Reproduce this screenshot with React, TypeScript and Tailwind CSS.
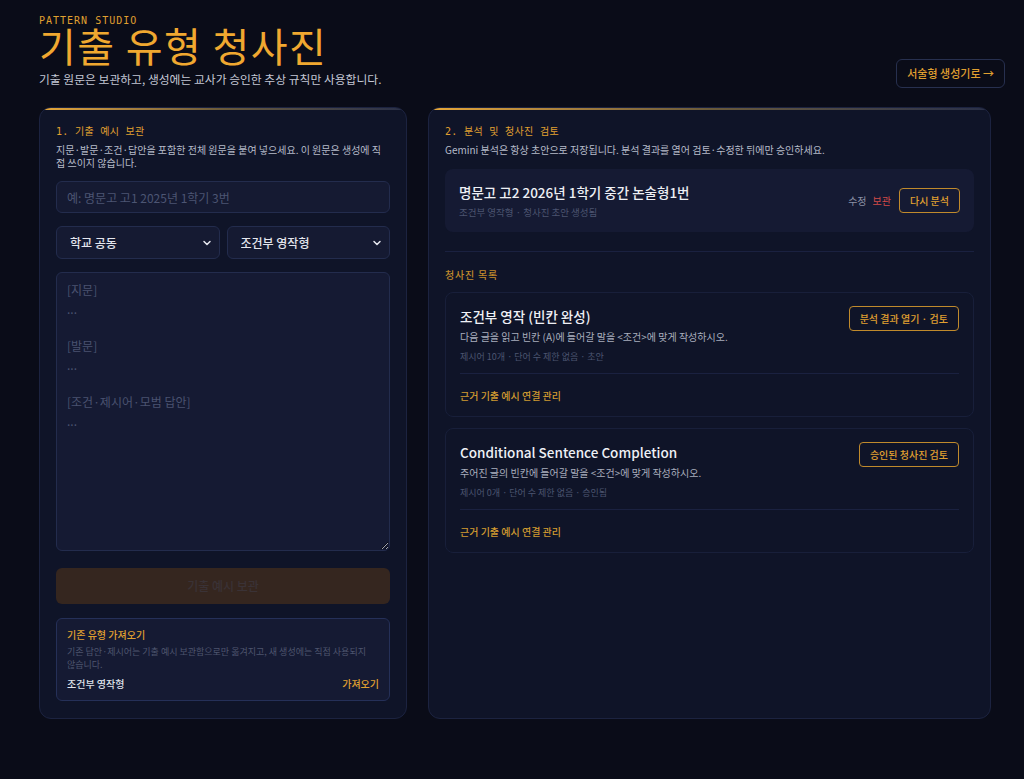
import React from 'react';
import { ChevronDown } from 'lucide-react';

const sans = { fontFamily: '"Noto Sans CJK KR", "Noto Sans", sans-serif' };
const mono = { fontFamily: '"DejaVu Sans Mono", "Noto Sans CJK KR", monospace' };

const placeholderText = '[지문]\n...\n\n[발문]\n...\n\n[조건·제시어·모범 답안]\n...';

interface Blueprint {
  title: string;
  prompt: string;
  meta: string;
  action: string;
}

const blueprints: Blueprint[] = [
  {
    title: '조건부 영작 (빈칸 완성)',
    prompt: '다음 글을 읽고 빈칸 (A)에 들어갈 말을 <조건>에 맞게 작성하시오.',
    meta: '제시어 10개 · 단어 수 제한 없음 · 초안',
    action: '분석 결과 열기 · 검토',
  },
  {
    title: 'Conditional Sentence Completion',
    prompt: '주어진 글의 빈칸에 들어갈 말을 <조건>에 맞게 작성하시오.',
    meta: '제시어 0개 · 단어 수 제한 없음 · 승인됨',
    action: '승인된 청사진 검토',
  },
];

function Select({ value }: { value: string }) {
  return (
    <div className="relative">
      <select
        defaultValue={value}
        className="w-full h-[33px] appearance-none rounded-md border border-[#232c4d] bg-[#151a32] pl-[13px] pr-8 text-[12px] font-medium text-[#e4e6ee] outline-none"
        style={sans}
      >
        <option>{value}</option>
      </select>
      <ChevronDown
        className="pointer-events-none absolute right-[7px] top-1/2 -translate-y-1/2 text-[#e4e6ee]"
        size={12}
        strokeWidth={3}
      />
    </div>
  );
}

function SectionTitle({ children }: { children: React.ReactNode }) {
  return (
    <div className="text-[10px] leading-[13px] tracking-[0.03em] text-[#e0a030]" style={mono}>
      {children}
    </div>
  );
}

export default function App() {
  return (
    <div className="min-h-[779px] bg-[#0a0c18] pl-[39px] pr-[33px] pt-[15px] pb-[59px]" style={sans}>
      {/* Header */}
      <div className="-mr-[14px] flex items-end justify-between">
        <div>
          <div className="text-[10px] leading-[12px] tracking-[0.1em] text-[#e0a030]" style={mono}>
            PATTERN STUDIO
          </div>
          <h1 className="text-[40px] leading-[36px] tracking-[0.035em] text-[#f0a830]">기출 유형 청사진</h1>
          <p className="mt-[8px] text-[11.8px] leading-[16px] text-[#c3c7d4]">
            기출 원문은 보관하고, 생성에는 교사가 승인한 추상 규칙만 사용합니다.
          </p>
        </div>
        <button className="mb-[-1px] h-[29px] rounded-md border border-[#27304f] px-[10px] text-[11px] font-medium text-[#e0a030]">
          서술형 생성기로 →
        </button>
      </div>

      <div className="mt-[20px] grid grid-cols-[368px_1fr] gap-[21px] h-[612px]">
        {/* Left panel */}
        <div className="flex flex-col overflow-hidden rounded-xl border border-[#1c2340] bg-[#0f1428]">
          <div className="h-[2px] bg-gradient-to-r from-[#e8a838] via-[#6a5a3a] to-[#2a3048]" />
          <div className="flex flex-1 flex-col px-[16px] pt-[15px]">
            <SectionTitle>1. 기출 예시 보관</SectionTitle>
            <p className="mt-[5px] text-[10px] leading-[13px] text-[#b6bbc9]">
              지문·발문·조건·답안을 포함한 전체 원문을 붙여 넣으세요. 이 원문은 생성에 직접 쓰이지 않습니다.
            </p>
            <input
              placeholder="예: 명문고 고1 2025년 1학기 3번"
              className="mt-[12px] h-[32px] w-full rounded-md border border-[#232c4d] bg-[#151a32] px-[10px] text-[12px] text-[#e4e6ee] outline-none placeholder:text-[#4c5573]"
              style={sans}
            />
            <div className="mt-[13px] grid grid-cols-2 gap-[7px]">
              <Select value="학교 공동" />
              <Select value="조건부 영작형" />
            </div>
            <textarea
              placeholder={placeholderText}
              className="mt-[13px] h-[279px] w-full resize-y rounded-md border border-[#232c4d] bg-[#151a33] px-[10px] py-[8px] text-[12px] leading-[18.7px] text-[#e4e6ee] outline-none placeholder:text-[#4a5270]"
              style={sans}
            />
            <button
              disabled
              className="mt-[17px] h-[36px] w-full rounded-md bg-[#35261f] text-[12px] font-medium text-[#3a3236]"
            >
              기출 예시 보관
            </button>
            <div className="mt-[14px] rounded-md border border-[#253058] bg-[#151a33] px-[10px] pt-[9px] pb-[9px]">
              <div className="text-[10px] font-medium leading-[14px] text-[#e0a030]">기존 유형 가져오기</div>
              <p className="mt-[3px] break-keep text-[9px] leading-[13px] text-[#4e556e]">
                기존 답안·제시어는 기출 예시 보관함으로만 옮겨지고, 새 생성에는 직접 사용되지 않습니다.
              </p>
              <div className="mt-[6px] flex items-center justify-between text-[10px] font-medium leading-[14px]">
                <span className="text-[#dfe2ea]">조건부 영작형</span>
                <span className="text-[#e0a030]">가져오기</span>
              </div>
            </div>
          </div>
        </div>

        {/* Right panel */}
        <div className="flex flex-col overflow-hidden rounded-xl border border-[#1c2340] bg-[#0f1428]">
          <div className="h-[2px] bg-gradient-to-r from-[#e8a838] via-[#6a5a3a] to-[#2a3048]" />
          <div className="flex flex-1 flex-col px-[16px] pt-[15px]">
            <SectionTitle>2. 분석 및 청사진 검토</SectionTitle>
            <p className="mt-[5px] text-[10px] leading-[13px] text-[#b6bbc9]">
              Gemini 분석은 항상 초안으로 저장됩니다. 분석 결과를 열어 검토·수정한 뒤에만 승인하세요.
            </p>

            <div className="mt-[13px] flex items-center justify-between rounded-lg bg-[#151a33] px-[14px] pt-[13px] pb-[13px]">
              <div>
                <div className="text-[13.5px] font-medium leading-[20px] text-[#eef0f5]">
                  명문고 고2 2026년 1학기 중간 논술형1번
                </div>
                <div className="mt-[4px] text-[9.5px] leading-[13px] text-[#4c5470]">조건부 영작형 · 청사진 초안 생성됨</div>
              </div>
              <div className="flex items-center text-[10px]">
                <span className="text-[#8a90a4]">수정</span>
                <span className="ml-[6px] text-[#d04a48]">보관</span>
                <button className="ml-[8px] h-[25px] rounded-[4px] border border-[#c08a2c] px-[10px] text-[10px] font-medium text-[#e0a030]">
                  다시 분석
                </button>
              </div>
            </div>

            <div className="mt-[19px] h-px bg-[#1a2140]" />

            <div className="mt-[16px] text-[10px] font-medium leading-[14px] tracking-[0.08em] text-[#c08a2c]">청사진 목록</div>

            <div className="mt-[10px] flex flex-col gap-[11px]">
              {blueprints.map((bp) => (
                <div key={bp.title} className="rounded-lg border border-[#181f3a] bg-[#0f1428] px-[14px] pt-[13px] pb-[13px]">
                  <div className="flex items-start justify-between">
                    <div>
                      <div className="text-[13.5px] font-medium leading-[20px] text-[#eef0f5]">{bp.title}</div>
                      <div className="mt-[4px] text-[10px] leading-[14px] text-[#a9aebd]">{bp.prompt}</div>
                      <div className="mt-[6px] text-[9px] leading-[13px] text-[#4c5470]">{bp.meta}</div>
                    </div>
                    <button className="shrink-0 h-[25px] rounded-[4px] border border-[#c08a2c] px-[10px] text-[10px] font-medium text-[#e0a030]">
                      {bp.action}
                    </button>
                  </div>
                  <div className="mt-[10px] h-px bg-[#1a2140]" />
                  <div className="mt-[15px] text-[10px] font-medium leading-[14px] text-[#d09a30]">근거 기출 예시 연결 관리</div>
                </div>
              ))}
            </div>
          </div>
        </div>
      </div>
    </div>
  );
}
